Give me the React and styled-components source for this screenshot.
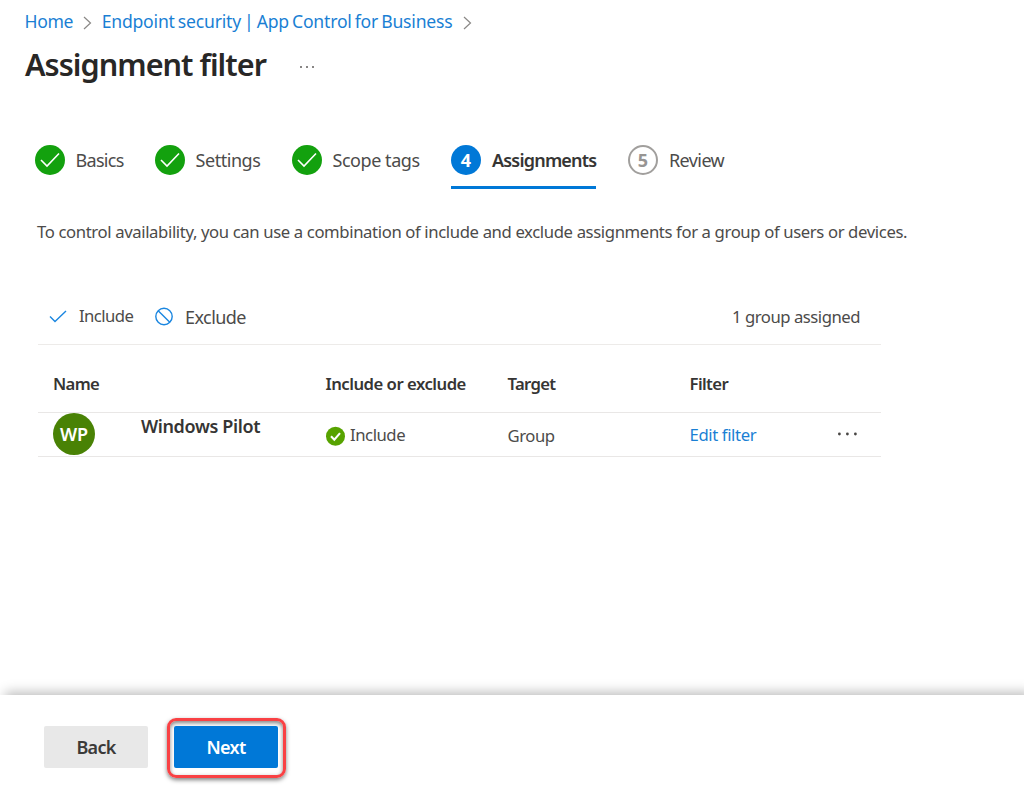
import React from 'react'
import styled, { createGlobalStyle } from 'styled-components'

const GlobalStyle = createGlobalStyle`
  * {
    box-sizing: border-box;
  }

  body {
    margin: 0;
    background: #fff;
    color: #4c4b4a;
    font-family: "Noto Sans", "Open Sans", sans-serif;
    overflow: hidden;
  }
`

const Page = styled.div`
  display: flex;
  flex-direction: column;
  height: 795px;
`

const Main = styled.main`
  flex: 1;
`

const Label = styled.span`
  font-size: ${p => p.$size || 16.7}px;
  font-weight: 400;
  letter-spacing: ${p => p.$spacing || -0.45}px;
  line-height: 24px;
  white-space: nowrap;
`

const Heading = styled(Label)`
  font-weight: 600;
  color: #363534;
`

const Breadcrumb = styled.nav`
  display: flex;
  align-items: center;
  height: 24px;
  padding-left: 24.5px;
  margin-top: 9px;
  word-spacing: -1.3px;

  svg {
    margin: 4px 9.5px 0 10px;
  }
`

const Link = styled(Label).attrs({ as: 'a', href: '#' })`
  color: #1a7fd4;
  text-decoration: none;
`

const TitleRow = styled.header`
  display: flex;
  align-items: center;
  height: 44px;
  margin-top: 9px;
  padding-left: 25px;

  svg {
    margin-top: 5px;
  }
`

const Title = styled.h1`
  width: 275px;
  margin: 0;
  color: #282726;
  font-size: 30.6px;
  font-weight: 600;
  line-height: 44px;
  letter-spacing: -0.97px;
  white-space: nowrap;
`

const Steps = styled.div`
  display: grid;
  grid-template-columns: 120px 137px 159px 177px auto;
  justify-content: start;
  margin-top: 58px;
  padding-left: 35px;
`

const Step = styled.div`
  display: flex;
  justify-self: start;
  gap: ${p => p.$gap || 11}px;
  height: 45px;
  padding-top: 1px;
  border-bottom: 3px solid ${p => p.$active ? '#0078d7' : 'transparent'};

  > span {
    padding-top: 3px;
  }
`

const StepCircle = styled.div`
  display: flex;
  align-items: center;
  justify-content: center;
  width: 30px;
  height: 30px;
  border: ${p => p.$outline ? '2px solid #a19f9d' : 'none'};
  border-radius: 50%;
  background: ${p => p.$bg || '#fff'};
  color: ${p => p.$outline ? '#979593' : '#fff'};
  font-size: 18px;
  font-weight: 700;
  line-height: 30px;
`

const Description = styled.p`
  height: 24px;
  margin: 31px 0 0 37px;
  line-height: 24px;
`

const Assignments = styled.section`
  width: 843px;
  margin: 57px 0 0 38px;
`

const Toolbar = styled.div`
  display: flex;
  height: 44px;
  padding: 3px 21px 0 11px;
  border-bottom: 1px solid #edebe9;
`

const Command = styled.div`
  display: flex;
  align-items: flex-start;
  width: ${p => p.$width}px;

  svg {
    margin: 3px 11px 0 0;
  }

  span {
    padding-top: ${p => p.$drop || 0}px;
  }
`

const Count = styled.div`
  margin-left: auto;
  padding-top: 1px;
`

const Row = styled.div`
  display: grid;
  grid-template-columns: 88px 184.5px 182px 182px 148.5px auto;
  height: ${p => p.$height}px;
  padding-left: 15px;
  padding-top: ${p => p.$top || 0}px;
  border-bottom: 1px solid #e9e7e6;
`

const Cell = styled.div`
  display: flex;
  align-items: flex-start;
  gap: 5.5px;
  padding-top: ${p => p.$top || 0}px;
`

const Avatar = styled.div`
  width: 42px;
  height: 42px;
  border-radius: 50%;
  background: #498205;
  color: #fff;
  font-size: 18px;
  font-weight: 600;
  line-height: 43px;
  letter-spacing: -0.2px;
  text-align: center;
`

const Footer = styled.footer`
  display: flex;
  align-items: flex-start;
  gap: 19px;
  height: 100px;
  padding: 31px 0 0 44px;
  background: #fff;
  box-shadow: 6px -2px 11px 1px rgba(0, 0, 0, 0.26);
`

const Button = styled.button`
  width: 104px;
  height: 42px;
  padding: 0;
  border: 0;
  border-radius: 2px;
  background: ${p => p.$primary ? '#0078d7' : '#e8e8e8'};
  color: ${p => p.$primary ? '#fff' : '#3b3a39'};
  font: 600 18px/42px "Noto Sans", "Open Sans", sans-serif;
  letter-spacing: -0.7px;
`

const Highlight = styled.div`
  width: 119px;
  height: 60px;
  margin-top: -8px;
  padding: 5px 0 0 4px;
  border: 3px solid #f94144;
  border-radius: 9px;
  box-shadow: 0 2px 4px rgba(0, 0, 0, 0.5), inset 0 2px 4px rgba(0, 0, 0, 0.5);
`

const Chevron = () => (
  <svg width="9" height="14" viewBox="0 0 9 14" fill="none" stroke="#8a8886" strokeWidth="1.2">
    <path d="M1 1l6.5 6L1 13" />
  </svg>
)

const StepCheck = () => (
  <svg width="20" height="16" viewBox="0 0 20 16" fill="none" stroke="#fff" strokeWidth="1.6">
    <path d="M1 8l6 6L19 1.5" />
  </svg>
)

const CheckIcon = () => (
  <svg width="19" height="18" viewBox="0 0 19 18" fill="none" stroke="#1a86e0" strokeWidth="1.4">
    <path d="M1 9.5l5 5L17 4" />
  </svg>
)

const BlockIcon = () => (
  <svg width="19" height="19" viewBox="0 0 19 19" fill="none" stroke="#1a86e0" strokeWidth="1.4">
    <circle cx="9" cy="9.5" r="8.2" />
    <path d="M3.2 3.7l11.6 11.6" />
  </svg>
)

const IncludedIcon = () => (
  <svg width="19" height="23" viewBox="0 0 19 23" fill="none">
    <circle cx="9.5" cy="13.3" r="9.5" fill="#57a300" />
    <path d="M5 13.3l3.3 3.5L14 10.1" stroke="#fff" strokeWidth="2.1" />
  </svg>
)

const Dots = ({ width, gap, r, color }) => (
  <svg width={width} height="4" viewBox={`0 0 ${width} 4`} fill={color}>
    <circle cx={r} cy="2" r={r} />
    <circle cx={r + gap} cy="2" r={r} />
    <circle cx={r + gap * 2} cy="2" r={r} />
  </svg>
)

const doneSteps = [
  { name: 'Basics', spacing: -0.7 },
  { name: 'Settings', spacing: -0.45 },
  { name: 'Scope tags', spacing: -0.45 },
]

const App = () => {
  return (
    <Page>
      <GlobalStyle />
      <Main>
        <Breadcrumb>
          <Link $size={17.6} $spacing={-0.36}>Home</Link>
          <Chevron />
          <Link $size={17.6} $spacing={-0.2}>Endpoint security | App Control for Business</Link>
          <Chevron />
        </Breadcrumb>
        <TitleRow>
          <Title>Assignment filter</Title>
          <Dots width={16} gap={6} r={1} color="#605e5c" />
        </TitleRow>
        <Steps>
          {doneSteps.map(step => (
            <Step key={step.name} $gap={10.5}>
              <StepCircle $bg="#13a10e"><StepCheck /></StepCircle>
              <Label $size={18} $spacing={step.spacing}>{step.name}</Label>
            </Step>
          ))}
          <Step $active>
            <StepCircle $bg="#0078d7">4</StepCircle>
            <Heading $size={18} $spacing={-0.8}>Assignments</Heading>
          </Step>
          <Step>
            <StepCircle $outline>5</StepCircle>
            <Label $size={18} $spacing={-0.6}>Review</Label>
          </Step>
        </Steps>
        <Description>
          <Label $spacing={-0.374}>
            To control availability, you can use a combination of include and exclude assignments for a group of users or devices.
          </Label>
        </Description>
        <Assignments>
          <Toolbar>
            <Command $width={106}>
              <CheckIcon />
              <Label $spacing={-0.55}>Include</Label>
            </Command>
            <Command $drop={1}>
              <BlockIcon />
              <Label $size={18} $spacing={-0.55}>Exclude</Label>
            </Command>
            <Count><Label $spacing={-0.48}>1 group assigned</Label></Count>
          </Toolbar>
          <Row $height={68} $top={27}>
            <Cell><Heading $spacing={-0.65}>Name</Heading></Cell>
            <Cell />
            <Cell><Heading $spacing={-0.5}>Include or exclude</Heading></Cell>
            <Cell><Heading $spacing={-0.7}>Target</Heading></Cell>
            <Cell><Heading $spacing={-0.6}>Filter</Heading></Cell>
          </Row>
          <Row $height={44}>
            <Cell><Avatar>WP</Avatar></Cell>
            <Cell $top={1}><Heading $size={18} $spacing={-0.37}>Windows Pilot</Heading></Cell>
            <Cell $top={10}>
              <IncludedIcon />
              <Label>Include</Label>
            </Cell>
            <Cell $top={11}><Label>Group</Label></Cell>
            <Cell $top={10}><Link $spacing={-0.38}>Edit filter</Link></Cell>
            <Cell $top={19}><Dots width={22} gap={8} r={1.4} color="#484644" /></Cell>
          </Row>
        </Assignments>
      </Main>
      <Footer>
        <Button>Back</Button>
        <Highlight><Button $primary>Next</Button></Highlight>
      </Footer>
    </Page>
  )
}

export default App
